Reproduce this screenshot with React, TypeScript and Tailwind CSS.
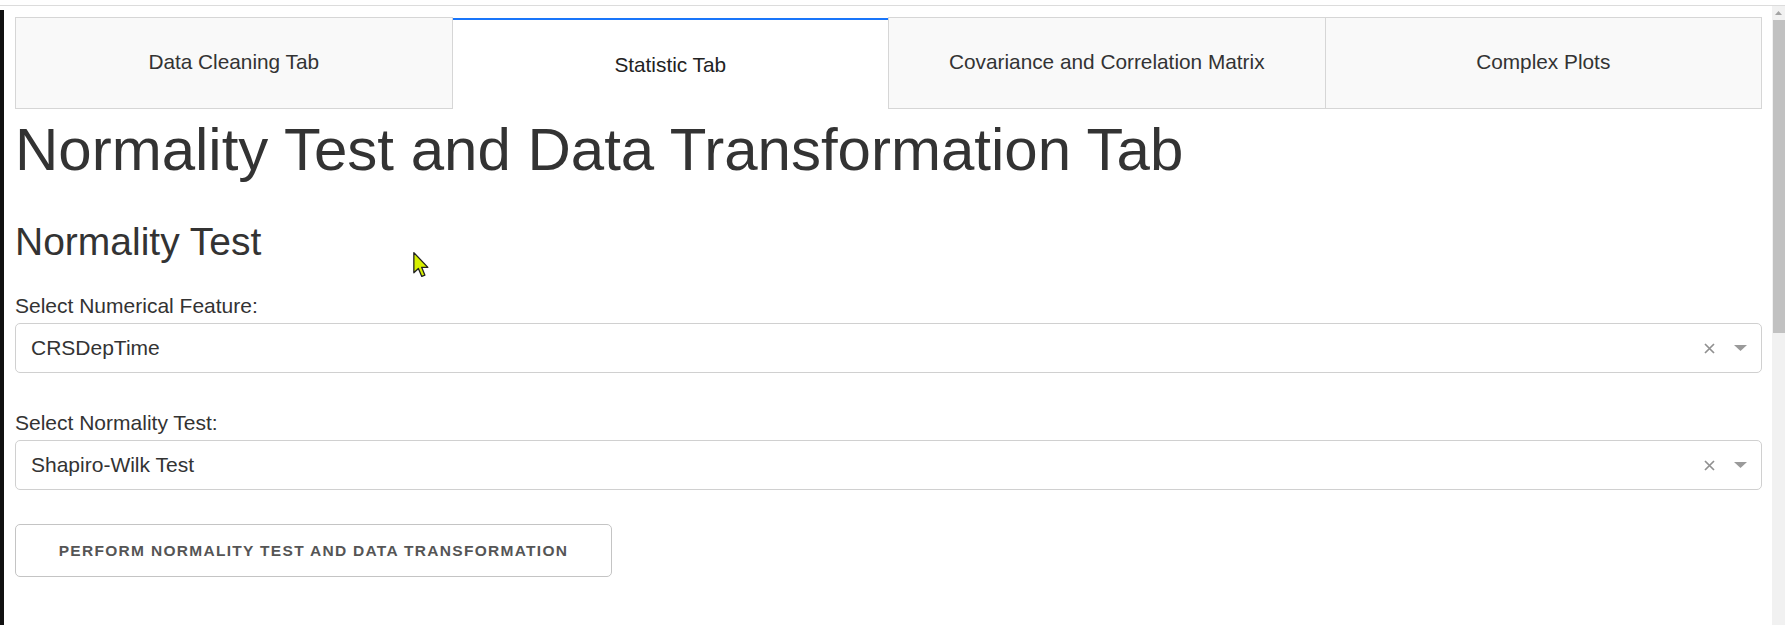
const TABS = ['Data Cleaning Tab', 'Statistic Tab', 'Covariance and Correlation Matrix', 'Complex Plots']
const ACTIVE = 1

function TabBar() {
  return (
    <div className="flex h-[92px] items-start">
      {TABS.map((label, i) => {
        if (i === ACTIVE) {
          return (
            <div
              key={label}
              className="mt-px flex h-[91px] flex-1 items-center justify-center border-t-2 border-[#1975fa] bg-white text-[20.8px] text-[#222]"
            >
              {label}
            </div>
          )
        }
        const leftBorder = i === 0 || i === ACTIVE + 1
        return (
          <div
            key={label}
            className={
              leftBorder
                ? 'flex h-[92px] flex-1 items-center justify-center border border-[#d6d6d6] bg-[#f9f9f9] pb-[3px] text-[20.8px] text-[#333]'
                : 'flex h-[92px] flex-1 items-center justify-center border-y border-r border-[#d6d6d6] bg-[#f9f9f9] pb-[3px] text-[20.8px] text-[#333]'
            }
          >
            {label}
          </div>
        )
      })}
    </div>
  )
}

function Dropdown({ value }: { value: string }) {
  return (
    <div className="flex h-[50px] items-center rounded-[5px] border border-[#d0d0d0] bg-white pl-[15px] pr-[14px]">
      <span className="flex-1 text-[21px] text-[#333]">{value}</span>
      <svg width="11" height="11" viewBox="0 0 11 11" className="mr-[19px]">
        <path d="M1 1L10 10M10 1L1 10" stroke="#909090" strokeWidth="1.7" />
      </svg>
      <svg width="13" height="7" viewBox="0 0 13 7">
        <path d="M0 0H13L6.5 6Z" fill="#9a9a9a" />
      </svg>
    </div>
  )
}

function Scrollbar() {
  return (
    <div className="flex w-[13px] flex-col bg-[#f1f1f1]">
      <div className="flex h-[14px] items-center justify-center">
        <svg width="7" height="4" viewBox="0 0 7 4">
          <path d="M0 4L3.5 0L7 4Z" fill="#a3a3a3" />
        </svg>
      </div>
      <div className="ml-px h-[313px] bg-[#c1c1c1]" />
    </div>
  )
}

function Cursor() {
  return (
    <svg width="16" height="26" viewBox="0 0 12 20" className="absolute left-[413px] top-[252px]">
      <path
        d="M0.5 0.5L0.5 16L4 12.7L6.6 18.8L9 17.8L6.5 11.8L11.3 11.8Z"
        fill="#d7f000"
        stroke="#222"
        strokeWidth="1"
        strokeLinejoin="round"
      />
    </svg>
  )
}

export default function App() {
  return (
    <div className="relative flex h-[625px] w-[1785px] flex-col overflow-hidden bg-white font-['Liberation_Sans',Arial,sans-serif]">
      <div className="h-[5px]" />
      <div className="h-px bg-[#dcdcdc]" />
      <div className="flex min-h-0 flex-1">
        <div className="mt-[4px] w-[4px] bg-[#111]" />
        <main className="flex-1 pl-[11px] pr-[10px] pt-[11px]">
          <TabBar />
          <h1 className="mt-[11px] text-[60px] leading-none text-[#333]">Normality Test and Data Transformation Tab</h1>
          <h2 className="mt-[42px] text-[39px] leading-none text-[#333]">Normality Test</h2>

          <label className="mt-[32px] block text-[21px] leading-[25px] text-[#333]">Select Numerical Feature:</label>
          <div className="mt-[5px]">
            <Dropdown value="CRSDepTime" />
          </div>

          <label className="mt-[37px] block text-[21px] leading-[25px] text-[#333]">Select Normality Test:</label>
          <div className="mt-[5px]">
            <Dropdown value="Shapiro-Wilk Test" />
          </div>

          <button
            type="button"
            className="mt-[34px] flex h-[53px] w-[597px] items-center justify-center rounded-[5px] border border-[#c4c4c4] bg-white text-[15.5px] font-bold uppercase tracking-[1.3px] text-[#555]"
          >
            Perform Normality Test and Data Transformation
          </button>
        </main>
        <Scrollbar />
      </div>
      <Cursor />
    </div>
  )
}
